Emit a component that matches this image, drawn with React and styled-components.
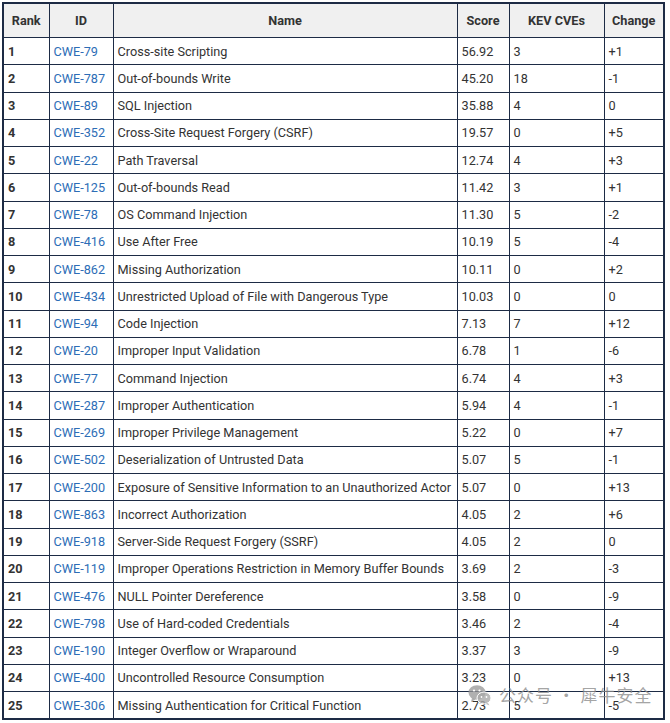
import React from 'react';
import styled, { createGlobalStyle } from 'styled-components';

const GlobalStyle = createGlobalStyle`
  body {
    margin: 0;
    padding: 2px;
    background: #fff;
    font-family: Roboto, "Liberation Sans", sans-serif;
  }
`;

const rows = [
  [1, 'CWE-79', 'Cross-site Scripting', '56.92', '3', '+1'],
  [2, 'CWE-787', 'Out-of-bounds Write', '45.20', '18', '-1'],
  [3, 'CWE-89', 'SQL Injection', '35.88', '4', '0'],
  [4, 'CWE-352', 'Cross-Site Request Forgery (CSRF)', '19.57', '0', '+5'],
  [5, 'CWE-22', 'Path Traversal', '12.74', '4', '+3'],
  [6, 'CWE-125', 'Out-of-bounds Read', '11.42', '3', '+1'],
  [7, 'CWE-78', 'OS Command Injection', '11.30', '5', '-2'],
  [8, 'CWE-416', 'Use After Free', '10.19', '5', '-4'],
  [9, 'CWE-862', 'Missing Authorization', '10.11', '0', '+2'],
  [10, 'CWE-434', 'Unrestricted Upload of File with Dangerous Type', '10.03', '0', '0'],
  [11, 'CWE-94', 'Code Injection', '7.13', '7', '+12'],
  [12, 'CWE-20', 'Improper Input Validation', '6.78', '1', '-6'],
  [13, 'CWE-77', 'Command Injection', '6.74', '4', '+3'],
  [14, 'CWE-287', 'Improper Authentication', '5.94', '4', '-1'],
  [15, 'CWE-269', 'Improper Privilege Management', '5.22', '0', '+7'],
  [16, 'CWE-502', 'Deserialization of Untrusted Data', '5.07', '5', '-1'],
  [17, 'CWE-200', 'Exposure of Sensitive Information to an Unauthorized Actor', '5.07', '0', '+13'],
  [18, 'CWE-863', 'Incorrect Authorization', '4.05', '2', '+6'],
  [19, 'CWE-918', 'Server-Side Request Forgery (SSRF)', '4.05', '2', '0'],
  [20, 'CWE-119', 'Improper Operations Restriction in Memory Buffer Bounds', '3.69', '2', '-3'],
  [21, 'CWE-476', 'NULL Pointer Dereference', '3.58', '0', '-9'],
  [22, 'CWE-798', 'Use of Hard-coded Credentials', '3.46', '2', '-4'],
  [23, 'CWE-190', 'Integer Overflow or Wraparound', '3.37', '3', '-9'],
  [24, 'CWE-400', 'Uncontrolled Resource Consumption', '3.23', '0', '+13'],
  [25, 'CWE-306', 'Missing Authentication for Critical Function', '2.73', '5', '-5'],
];

const Wrap = styled.div`
  position: relative;
  width: 661px;
`;

const Table = styled.table`
  width: 661px;
  border-collapse: collapse;
  table-layout: fixed;
  border: 2px solid #1d2b45;
  font-size: 12.7px;
  color: #333;
`;

const Th = styled.th`
  height: 33px;
  padding: 0 4px;
  background: #f0f0f0;
  border: 1px solid #1d2b45;
  font-weight: 700;
  text-align: center;
  color: #333;
`;

const Td = styled.td`
  height: 26.25px;
  padding: 0 4px;
  border: 1px solid #1d2b45;
  white-space: nowrap;
  font-weight: ${(p) => (p.bold ? 700 : 400)};
`;

const IdLink = styled.a`
  color: #2d6db6;
  text-decoration: none;
`;

const Watermark = styled.div`
  position: absolute;
  left: 466px;
  top: 680px;
  display: flex;
  align-items: center;
  gap: 7px;
  color: rgba(140, 140, 140, 0.8);
  font-family: "Noto Sans CJK SC", sans-serif;
  font-size: 17px;
  letter-spacing: 1px;
  pointer-events: none;
`;

const WechatIcon = () => (
  <svg width="24" height="22" viewBox="0 0 24 22">
    <ellipse cx="9" cy="8.5" rx="8.5" ry="7.3" fill="rgba(150,150,150,0.75)" />
    <path d="M4 14 L3 18 L7.5 15.5 Z" fill="rgba(150,150,150,0.75)" />
    <ellipse cx="16" cy="14" rx="7" ry="6" fill="rgba(170,170,170,0.8)" stroke="#fff" strokeWidth="1" />
    <path d="M20 19 L21.5 21.5 L17.5 19.8 Z" fill="rgba(170,170,170,0.8)" />
    <circle cx="6" cy="6.5" r="1.1" fill="#fff" />
    <circle cx="11.5" cy="6.5" r="1.1" fill="#fff" />
    <circle cx="13.5" cy="13" r="0.9" fill="#fff" />
    <circle cx="18.5" cy="13" r="0.9" fill="#fff" />
  </svg>
);

const App = () => (
  <>
    <GlobalStyle />
    <Wrap>
      <Table>
        <colgroup>
          <col style={{ width: 46 }} />
          <col style={{ width: 64 }} />
          <col style={{ width: 344 }} />
          <col style={{ width: 52 }} />
          <col style={{ width: 95 }} />
          <col style={{ width: 60 }} />
        </colgroup>
        <thead>
          <tr>
            <Th>Rank</Th>
            <Th>ID</Th>
            <Th>Name</Th>
            <Th>Score</Th>
            <Th>KEV CVEs</Th>
            <Th>Change</Th>
          </tr>
        </thead>
        <tbody>
          {rows.map(([rank, id, name, score, kev, change]) => (
            <tr key={id}>
              <Td bold>{rank}</Td>
              <Td><IdLink href="#">{id}</IdLink></Td>
              <Td>{name}</Td>
              <Td>{score}</Td>
              <Td>{kev}</Td>
              <Td>{change}</Td>
            </tr>
          ))}
        </tbody>
      </Table>
      <Watermark>
        <WechatIcon />
        <span>公众号 · 犀牛安全</span>
      </Watermark>
    </Wrap>
  </>
);

export default App;
